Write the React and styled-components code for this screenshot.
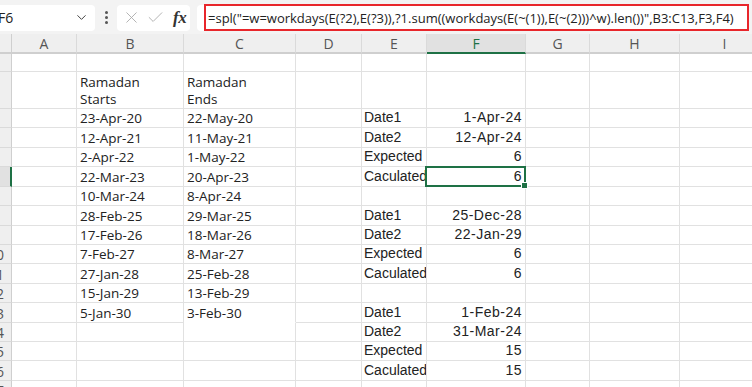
import React from 'react'
import styled, { createGlobalStyle } from 'styled-components'
import { ChevronDown, X, Check } from 'lucide-react'

const GlobalStyle = createGlobalStyle`
    html, body {
        margin:0;
        padding:0;
        background:#ffffff;
        overflow:hidden;
    }
`;

const Wrapper = styled.div`
    width:752px;
    height:387px;
    overflow:hidden;
    font-family:"Open Sans", "Noto Sans", sans-serif;
    color:#222;
`;

const Toolbar = styled.div`
    height:34px;
    background:#f3f3f3;
    display:flex;
    align-items:center;
    box-sizing:border-box;
    padding-top:1px;
`;

const NameBox = styled.div`
    margin-left:-14px;
    width:109px;
    height:26px;
    background:#fff;
    border-radius:4px;
    box-sizing:border-box;
    display:flex;
    align-items:center;
    justify-content:space-between;
    padding:0 6px 0 12px;
    font-size:14px;
    color:#222;
`;

const Dots = styled.div`
    width:22px;
    display:flex;
    flex-direction:column;
    align-items:center;
    gap:2px;
    & span {
        width:3px;
        height:3px;
        border-radius:50%;
        background:#555;
    }
`;

const FxBox = styled.div`
    width:73px;
    height:26px;
    background:#fff;
    border-radius:4px;
    display:flex;
    align-items:center;
    gap:5px;
    padding-left:5px;
    box-sizing:border-box;
    color:#a8a8a8;
`;

const FxMark = styled.span`
    font-family:"Liberation Serif", serif;
    font-style:italic;
    font-weight:700;
    font-size:17px;
    color:#333;
    margin-left:3px;
    letter-spacing:-0.5px;
`;

const FormulaBox = styled.div`
    flex:1;
    margin-left:7px;
    margin-right:3px;
    height:26px;
    background:#fff;
    border-radius:4px;
    display:flex;
    align-items:center;
`;

const Formula = styled.div`
    margin-left:7px;
    flex:1;
    height:27px;
    border:2px solid #e8262b;
    box-sizing:border-box;
    display:flex;
    align-items:center;
    padding-left:2px;
    font-size:13px;
    white-space:nowrap;
    overflow:hidden;
    color:#222;
`;

const Sheet = styled.div`
    display:grid;
    grid-template-columns:12px 65px 107px 112px 66px 65px 99px 64px 90px 90px;
    grid-template-rows:20px 18px 37px repeat(15, 19.43px);
`;

const Corner = styled.div`
    background:#efefef;
    border-right:1px solid #cfcfcf;
    border-bottom:2px solid #cfcfcf;
    box-sizing:border-box;
`;

const ColHead = styled.div`
    background:${(p) => (p.$active ? '#e1e1e1' : '#efefef')};
    border-right:1px solid #dadada;
    border-bottom:2px solid ${(p) => (p.$active ? '#1e7145' : '#cfcfcf')};
    box-sizing:border-box;
    display:flex;
    align-items:center;
    justify-content:center;
    font-size:14px;
    color:${(p) => (p.$active ? '#1e7145' : '#555')};
`;

const RowHead = styled.div`
    background:${(p) => (p.$active ? '#e1e1e1' : '#efefef')};
    border-right:${(p) => (p.$active ? '2px solid #1e7145' : '1px solid #cfcfcf')};
    border-bottom:1px solid #dadada;
    box-sizing:border-box;
    display:flex;
    align-items:flex-end;
    justify-content:flex-end;
    overflow:hidden;
    font-size:14px;
    line-height:17px;
    color:${(p) => (p.$active ? '#1e7145' : '#555')};
    & span {
        flex:none;
        width:30px;
        text-align:center;
    }
`;

const Cell = styled.div`
    position:relative;
    border-right:1px solid #e1e1e1;
    border-bottom:1px solid ${(p) => (p.$noBottom ? '#ffffff' : '#e1e1e1')};
    box-sizing:border-box;
    display:flex;
    align-items:flex-end;
    justify-content:${(p) => (p.$right ? 'flex-end' : 'flex-start')};
    padding:0 ${(p) => (p.$right ? '3px' : '0')} ${(p) => (p.$alt ? '1px' : '0')} ${(p) => (p.$alt ? '2px' : '3px')};
    font-family:${(p) => (p.$alt ? '"Liberation Sans", Arial, sans-serif' : '"Open Sans", "Noto Sans", sans-serif')};
    font-size:${(p) => (p.$alt ? '14px' : '13.5px')};
    letter-spacing:${(p) => (p.$right ? '0.5px' : '0')};
    line-height:17px;
    white-space:${(p) => (p.$wrap ? 'pre-line' : 'nowrap')};
    overflow:${(p) => (p.$sel ? 'visible' : 'hidden')};
    color:#222;
    ${(p) => p.$sel && `
        &::after {
            content:"";
            position:absolute;
            left:-2px;
            top:-1px;
            right:-1px;
            bottom:-1px;
            border:2px solid #1e7145;
            pointer-events:none;
        }
        &::before {
            content:"";
            position:absolute;
            right:-3px;
            bottom:-3px;
            width:5px;
            height:5px;
            background:#1e7145;
            border:1px solid #fff;
            z-index:2;
        }
    `}
`;

const cols = ['A', 'B', 'C', 'D', 'E', 'F', 'G', 'H', 'I'];

const ramadan = [
    ['23-Apr-20', '22-May-20'],
    ['12-Apr-21', '11-May-21'],
    ['2-Apr-22', '1-May-22'],
    ['22-Mar-23', '20-Apr-23'],
    ['10-Mar-24', '8-Apr-24'],
    ['28-Feb-25', '29-Mar-25'],
    ['17-Feb-26', '18-Mar-26'],
    ['7-Feb-27', '8-Mar-27'],
    ['27-Jan-28', '25-Feb-28'],
    ['15-Jan-29', '13-Feb-29'],
    ['5-Jan-30', '3-Feb-30'],
];

// E/F blocks keyed by row number
const checks = {
    3: ['Date1', '1-Apr-24'],
    4: ['Date2', '12-Apr-24'],
    5: ['Expected', '6'],
    6: ['Caculated', '6'],
    8: ['Date1', '25-Dec-28'],
    9: ['Date2', '22-Jan-29'],
    10: ['Expected', '6'],
    11: ['Caculated', '6'],
    13: ['Date1', '1-Feb-24'],
    14: ['Date2', '31-Mar-24'],
    15: ['Expected', '15'],
    16: ['Caculated', '15'],
};

const formula = '=spl("=w=workdays(E(?2),E(?3)),?1.sum((workdays(E(~(1)),E(~(2)))^w).len())",B3:C13,F3,F4)';

const SheetRow = ({ n }) => {
    const dates = n === 2 ? ['Ramadan\nStarts', 'Ramadan\nEnds'] : ramadan[n - 3] || ['', ''];
    const chk = checks[n] || ['', ''];
    return (
        <>
            <RowHead $active={n === 6}><span>{n}</span></RowHead>
            <Cell />
            <Cell $wrap={n === 2}>{dates[0]}</Cell>
            <Cell $wrap={n === 2} $noBottom={n === 13}>{dates[1]}</Cell>
            <Cell />
            <Cell $alt>{chk[0]}</Cell>
            <Cell $alt $right $sel={n === 6}>{chk[1]}</Cell>
            <Cell />
            <Cell />
            <Cell />
        </>
    );
};

export default function App() {
    const rows = Array.from({ length: 17 }, (_, i) => i + 1);
    return (
        <Wrapper>
            <GlobalStyle />
            <Toolbar>
                <NameBox>
                    <span>F6</span>
                    <ChevronDown size={15} strokeWidth={1.6} color="#444" />
                </NameBox>
                <Dots><span /><span /><span /></Dots>
                <FxBox>
                    <X size={19} strokeWidth={1.1} />
                    <Check size={19} strokeWidth={1.1} />
                    <FxMark>fx</FxMark>
                </FxBox>
                <FormulaBox>
                    <Formula>{formula}</Formula>
                </FormulaBox>
            </Toolbar>
            <Sheet>
                <Corner />
                {cols.map((c) => (
                    <ColHead key={c} $active={c === 'F'}>{c}</ColHead>
                ))}
                {rows.map((n) => (
                    <SheetRow key={n} n={n} />
                ))}
            </Sheet>
        </Wrapper>
    );
}
